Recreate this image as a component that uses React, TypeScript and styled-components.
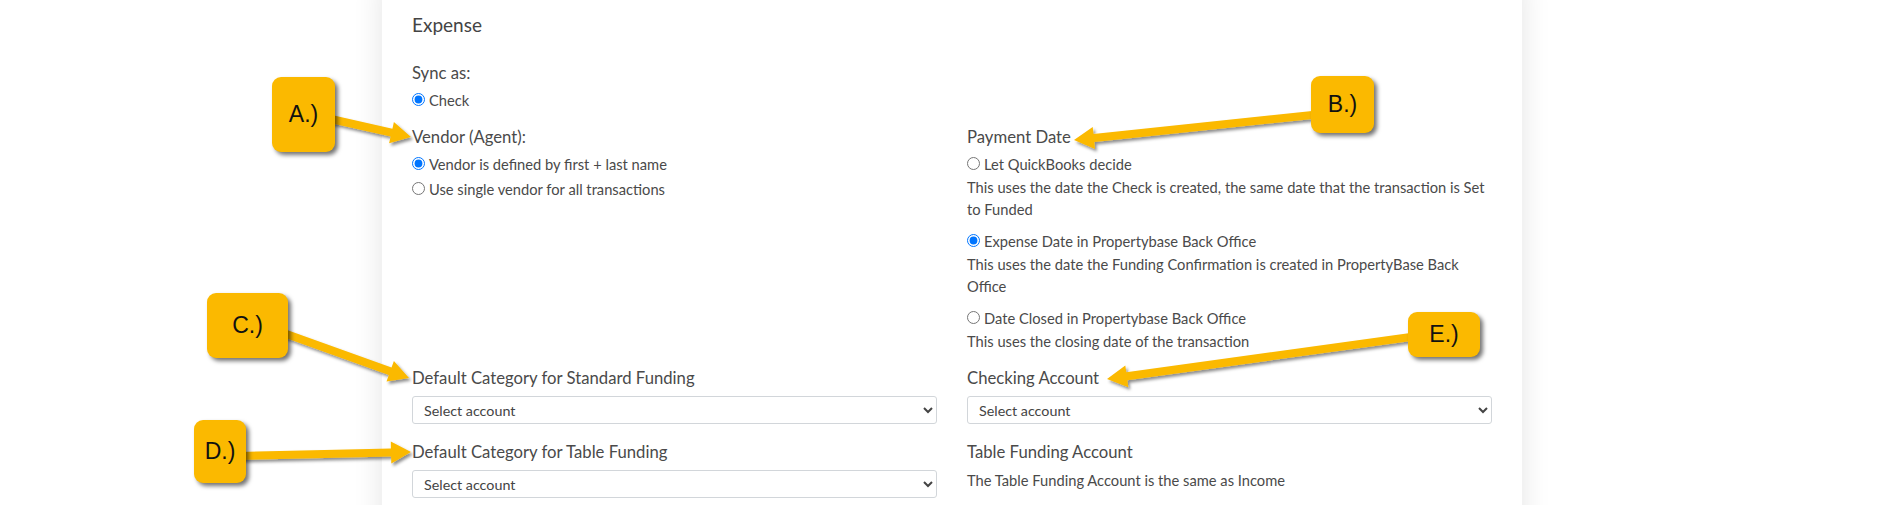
import React, { FC } from 'react'
import styled, { createGlobalStyle } from 'styled-components'

const GlobalStyle = createGlobalStyle`
  html, body {
    margin: 0;
    padding: 0;
    background: #fff;
  }
  body {
    font-family: Lato, "Open Sans", Arial, sans-serif;
    color: #4a4a4a;
  }
`

const Page = styled.div`
  position: relative;
  width: 1895px;
  height: 505px;
  overflow: hidden;
  padding-left: 382px;
  box-sizing: border-box;
`

const Card = styled.section`
  width: 1140px;
  min-height: 620px;
  margin-top: -20px;
  padding: 33px 30px 40px;
  box-sizing: border-box;
  background: #fff;
  box-shadow: 0 0 28px rgba(0, 0, 0, 0.11);
`

const Title = styled.h2`
  margin: 0;
  font-size: 19px;
  line-height: 24px;
  font-weight: 400;
  color: #444;
`

const Label = styled.div<{ $top?: number }>`
  margin-top: ${(p) => p.$top ?? 0}px;
  margin-bottom: 3px;
  font-size: 16.7px;
  line-height: 22px;
  color: #4a4a4a;
`

const Option = styled.label`
  display: flex;
  align-items: center;
  height: 25px;
  font-size: 14.7px;
  color: #4a4a4a;

  input {
    width: 13px;
    height: 13px;
    margin: 0 4px 0 0;
  }
`

const Hint = styled.p<{ $last?: boolean; $top?: number }>`
  margin: ${(p) => p.$top ?? 0}px 0 ${(p) => (p.$last ? 0 : 8)}px;
  font-size: 14.7px;
  line-height: 22px;
  color: #4a4a4a;
`

const Grid = styled.div`
  display: grid;
  grid-template-columns: 525px 525px;
  column-gap: 30px;
  row-gap: 15px;
  align-items: start;
  margin-top: 14px;
`

const Field = styled.div`
  display: flex;
  flex-direction: column;
`

const Select = styled.select`
  width: 100%;
  height: 28px;
  margin: 4px 0 2px;
  padding: 0 7px;
  border: 1px solid #d2d6da;
  border-radius: 3px;
  background: #fff;
  font-family: Lato, Arial, sans-serif;
  font-size: 14.3px;
  color: #444;
`

const Callout = styled.div<{ $x: number; $y: number; $w: number; $h: number }>`
  position: absolute;
  left: ${(p) => p.$x}px;
  top: ${(p) => p.$y}px;
  width: ${(p) => p.$w}px;
  height: ${(p) => p.$h}px;
  display: flex;
  align-items: center;
  justify-content: center;
  background: #fbb900;
  border-radius: 9px;
  box-shadow: 3px 3px 4px rgba(0, 0, 0, 0.55);
  font-family: "Liberation Sans", Arial, sans-serif;
  font-size: 23px;
  color: #111;
`

const Arrows = styled.svg`
  position: absolute;
  left: 0;
  top: 0;
  pointer-events: none;
`

type ArrowDef = { x1: number; y1: number; x2: number; y2: number }

const arrowPoints = ({ x1, y1, x2, y2 }: ArrowDef) => {
  const dx = x2 - x1
  const dy = y2 - y1
  const len = Math.hypot(dx, dy)
  const ux = dx / len
  const uy = dy / len
  const nx = -uy
  const ny = ux
  const shaft = 4
  const head = 11
  const headLen = 20
  const bx = x2 - ux * headLen
  const by = y2 - uy * headLen
  const pts = [
    [x1 + nx * shaft, y1 + ny * shaft],
    [bx + nx * shaft, by + ny * shaft],
    [bx + nx * head, by + ny * head],
    [x2, y2],
    [bx - nx * head, by - ny * head],
    [bx - nx * shaft, by - ny * shaft],
    [x1 - nx * shaft, y1 - ny * shaft],
  ]
  return pts.map(([x, y]) => `${x.toFixed(1)},${y.toFixed(1)}`).join(' ')
}

const arrows: ArrowDef[] = [
  { x1: 322, y1: 117, x2: 411, y2: 137 },
  { x1: 1322, y1: 114, x2: 1074, y2: 140 },
  { x1: 278, y1: 331, x2: 409, y2: 378 },
  { x1: 236, y1: 456, x2: 411, y2: 452 },
  { x1: 1418, y1: 336, x2: 1107, y2: 379 },
]

const callouts = [
  { text: 'A.)', x: 272, y: 77, w: 63, h: 75 },
  { text: 'B.)', x: 1311, y: 76, w: 63, h: 57 },
  { text: 'C.)', x: 207, y: 293, w: 81, h: 65 },
  { text: 'D.)', x: 194, y: 420, w: 52, h: 63 },
  { text: 'E.)', x: 1408, y: 312, w: 72, h: 45 },
]

const App: FC = () => {
  return (
    <Page>
      <GlobalStyle />
      <Card>
        <Title>Expense</Title>
        <Label $top={25}>Sync as:</Label>
        <Option>
          <input type="radio" name="sync" defaultChecked />
          Check
        </Option>

        <Grid>
          <Field>
            <Label>Vendor (Agent):</Label>
            <Option>
              <input type="radio" name="vendor" defaultChecked />
              Vendor is defined by first + last name
            </Option>
            <Option>
              <input type="radio" name="vendor" />
              Use single vendor for all transactions
            </Option>
          </Field>

          <Field>
            <Label>Payment Date</Label>
            <Option>
              <input type="radio" name="payment" />
              Let QuickBooks decide
            </Option>
            <Hint>
              This uses the date the Check is created, the same date that the transaction is Set
              to Funded
            </Hint>
            <Option>
              <input type="radio" name="payment" defaultChecked />
              Expense Date in Propertybase Back Office
            </Option>
            <Hint>
              This uses the date the Funding Confirmation is created in PropertyBase Back Office
            </Hint>
            <Option>
              <input type="radio" name="payment" />
              Date Closed in Propertybase Back Office
            </Option>
            <Hint $last>This uses the closing date of the transaction</Hint>
          </Field>

          <Field>
            <Label>Default Category for Standard Funding</Label>
            <Select defaultValue="">
              <option value="">Select account</option>
            </Select>
          </Field>

          <Field>
            <Label>Checking Account</Label>
            <Select defaultValue="">
              <option value="">Select account</option>
            </Select>
          </Field>

          <Field>
            <Label>Default Category for Table Funding</Label>
            <Select defaultValue="">
              <option value="">Select account</option>
            </Select>
          </Field>

          <Field>
            <Label>Table Funding Account</Label>
            <Hint $last $top={3}>
              The Table Funding Account is the same as Income
            </Hint>
          </Field>
        </Grid>
      </Card>

      <Arrows width={1895} height={505} viewBox="0 0 1895 505">
        <defs>
          <filter id="arrowShadow" x="-10%" y="-50%" width="120%" height="200%">
            <feDropShadow dx="2" dy="2.5" stdDeviation="1.6" floodColor="#000" floodOpacity="0.45" />
          </filter>
        </defs>
        {arrows.map((a, i) => (
          <polygon key={i} points={arrowPoints(a)} fill="#fbb900" filter="url(#arrowShadow)" />
        ))}
      </Arrows>

      {callouts.map((c) => (
        <Callout key={c.text} $x={c.x} $y={c.y} $w={c.w} $h={c.h}>
          {c.text}
        </Callout>
      ))}
    </Page>
  )
}

export default App
